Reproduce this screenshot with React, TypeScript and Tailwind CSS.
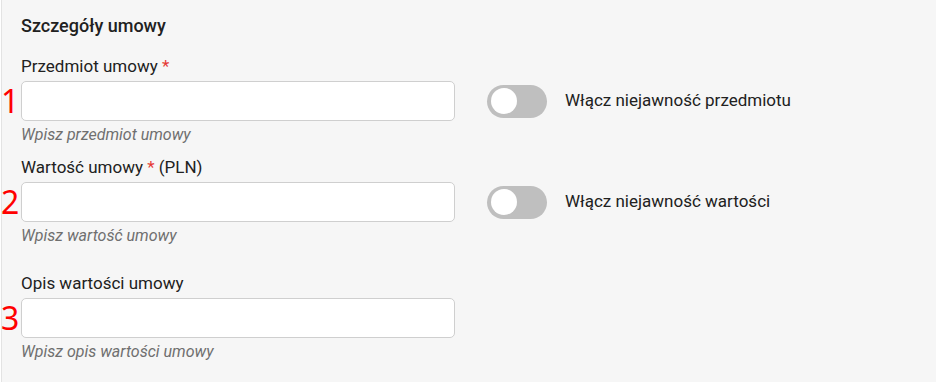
const fieldFont = { fontFamily: 'Roboto, "Noto Sans", sans-serif' }

type FieldProps = {
  num: string
  label: React.ReactNode
  hint: string
  toggle?: string
  className?: string
}

function Toggle() {
  return (
    <div className="flex h-[33px] w-[60px] items-center rounded-full bg-[#bfbfbf] px-[4px]">
      <div className="h-[26px] w-[26px] rounded-full bg-white" />
    </div>
  )
}

function Field({ num, label, hint, toggle, className }: FieldProps) {
  return (
    <div className={className}>
      <div className="text-[17px] leading-6 text-[#212121]">{label}</div>
      <div className="mt-[3px] flex items-center">
        <div className="relative">
          <span
            className="absolute -left-[20px] top-[1px] text-[32px] leading-[38px] text-[#ff0000]"
            style={{ fontFamily: '"Noto Sans", sans-serif' }}
          >
            {num}
          </span>
          <input
            type="text"
            className="block h-10 w-[434px] rounded-[5px] border border-[#cfcfcf] bg-white px-3 text-[16px] outline-none"
          />
        </div>
        {toggle && (
          <div className="ml-8 flex items-center">
            <Toggle />
            <span className="ml-[18px] text-[17px] text-[#212121]">{toggle}</span>
          </div>
        )}
      </div>
      <div className="mt-1 text-[16px] leading-5 italic text-[#6f6f6f]">{hint}</div>
    </div>
  )
}

export default function App() {
  return (
    <div className="h-[382px] w-[936px] bg-white" style={fieldFont}>
      <div className="ml-px h-full border-l border-[#e3e3e3] bg-[#f6f6f6] pl-[19px] pt-[14px]">
        <h3 className="text-[18px] font-medium leading-6 text-[#212121]">Szczegóły umowy</h3>

        <Field
          className="mt-4"
          num="1"
          label={
            <>
              Przedmiot umowy <span className="text-[#e53935]">*</span>
            </>
          }
          hint="Wpisz przedmiot umowy"
          toggle="Włącz niejawność przedmiotu"
        />

        <Field
          className="mt-[10px]"
          num="2"
          label={
            <>
              Wartość umowy <span className="text-[#e53935]">*</span> (PLN)
            </>
          }
          hint="Wpisz wartość umowy"
          toggle="Włącz niejawność wartości"
        />

        <Field
          className="mt-[25px]"
          num="3"
          label="Opis wartości umowy"
          hint="Wpisz opis wartości umowy"
        />
      </div>
    </div>
  )
}
